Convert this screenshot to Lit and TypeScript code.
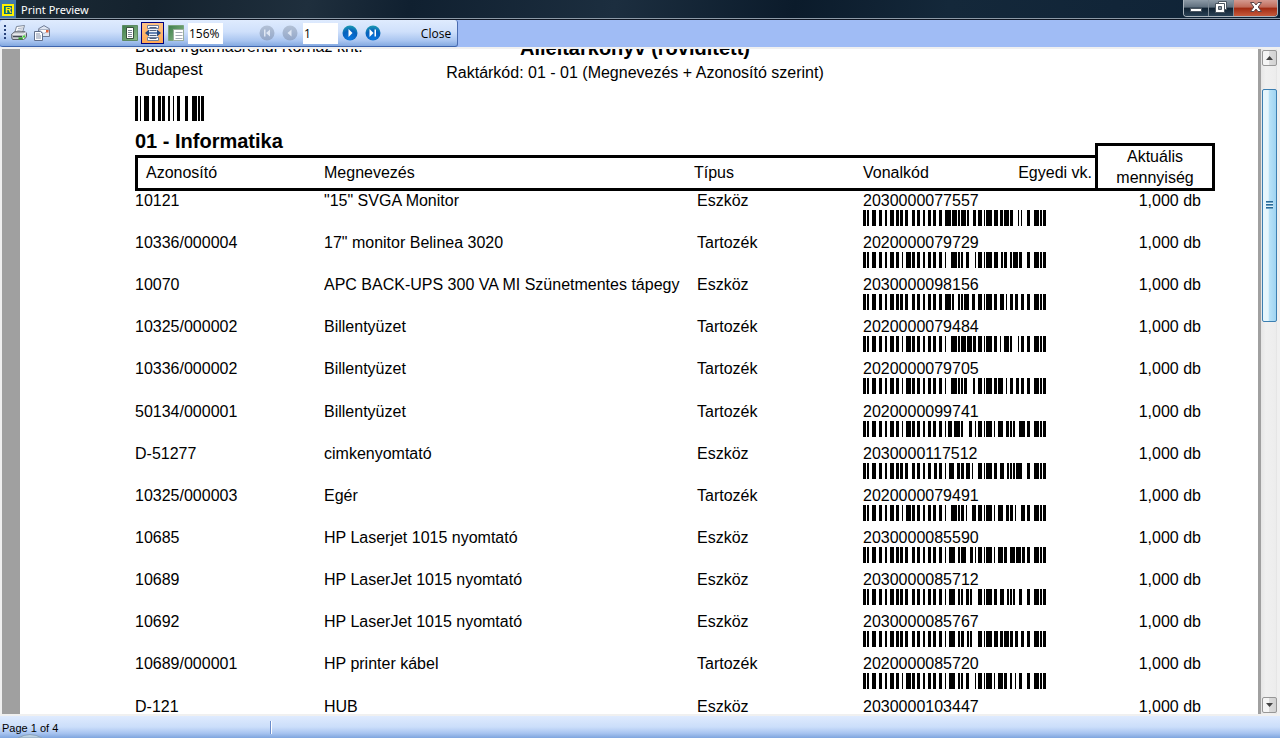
import { LitElement, html, css, svg } from "lit";
import { customElement, property } from "lit/decorators.js";

const PATTERNS = (
  "212222 222122 222221 121223 121322 131222 122213 122312 132212 221213 " +
  "221312 231212 112232 122132 122231 113222 123122 123221 223211 221132 " +
  "221231 213212 223112 312131 311222 321122 321221 312212 322112 322211 " +
  "212123 212321 232121 111323 131123 131321 112313 132113 132311 211313 " +
  "231113 231311 112133 112331 132131 113123 113321 133121 313121 211331 " +
  "231131 213113 213311 213131 311123 311321 331121 312113 312311 332111 " +
  "314111 221411 431111 111224 111422 121124 121421 141122 141221 112214 " +
  "112412 122114 122411 142112 142211 241211 221114 413111 241112 134111 " +
  "111242 121142 121241 114212 124112 124211 411212 421112 421211 212141 " +
  "214121 412121 111143 111341 131141 114113 114311 411113 411311 113141 " +
  "114131 311141 411131 211412 211214 211232 2331112"
).split(" ");

const START_C = 105;
const CODE_A = 101;
const STOP = 106;

/* Code 128: digit pairs in set C, a trailing odd digit in set A. */
function encode(digits: string): number[] {
  const values = [START_C];
  let i = 0;
  for (; i + 1 < digits.length; i += 2) values.push(Number(digits.slice(i, i + 2)));
  if (i < digits.length) values.push(CODE_A, digits.charCodeAt(i) - 32);
  const sum = values.reduce((acc, v, n) => acc + v * Math.max(n, 1), 0);
  return [...values, sum % 103, STOP];
}

@customElement("bar-code")
class BarCode extends LitElement {
  static styles = css`
    :host { display: block; }
    .bars { display: block; width: 100%; height: 100%; shape-rendering: crispEdges; }
  `;
  @property() value = "";

  render() {
    const widths = encode(this.value).map((v) => PATTERNS[v]).join("");
    let x = 0;
    let d = "";
    [...widths].forEach((w, i) => {
      if (i % 2 === 0) d += `M${x} 0h${w}v1h-${w}z`;
      x += Number(w);
    });
    return html`<svg class="bars" viewBox="0 0 ${x} 1" preserveAspectRatio="none" role="img" aria-label=${this.value}>
      <path d=${d}></path>
    </svg>`;
  }
}

const ROWS: [string, string, string, string][] = [
  ["10121", '"15" SVGA Monitor', "Eszköz", "2030000077557"],
  ["10336/000004", '17" monitor Belinea 3020', "Tartozék", "2020000079729"],
  ["10070", "APC BACK-UPS 300 VA MI Szünetmentes tápegy", "Eszköz", "2030000098156"],
  ["10325/000002", "Billentyüzet", "Tartozék", "2020000079484"],
  ["10336/000002", "Billentyüzet", "Tartozék", "2020000079705"],
  ["50134/000001", "Billentyüzet", "Tartozék", "2020000099741"],
  ["D-51277", "cimkenyomtató", "Eszköz", "2030000117512"],
  ["10325/000003", "Egér", "Tartozék", "2020000079491"],
  ["10685", "HP Laserjet 1015 nyomtató", "Eszköz", "2030000085590"],
  ["10689", "HP LaserJet 1015 nyomtató", "Eszköz", "2030000085712"],
  ["10692", "HP LaserJet 1015 nyomtató", "Eszköz", "2030000085767"],
  ["10689/000001", "HP printer kábel", "Tartozék", "2020000085720"],
  ["D-121", "HUB", "Eszköz", "2030000103447"],
];

const icon = (body: unknown) => html`<svg width="16" height="16" viewBox="0 0 16 16" aria-hidden="true">
  <defs>
    <linearGradient id="green" x1="0" y1="0" x2="1" y2="1"><stop offset="0" stop-color="#3e7d4c"/><stop offset="1" stop-color="#8fbd8a"/></linearGradient>
    <radialGradient id="blue" cx="0.5" cy="0.9" r="0.9"><stop offset="0" stop-color="#0a78e0"/><stop offset="0.6" stop-color="#0560bd"/><stop offset="1" stop-color="#1d9bb0"/></radialGradient>
    <linearGradient id="grey" x1="0" y1="0" x2="0" y2="1"><stop offset="0" stop-color="#b3c1d6"/><stop offset="1" stop-color="#93a7c9"/></linearGradient>
  </defs>${body}</svg>`;

const printer = svg`
  <path d="M5.5 1.5l8-1-2 7-8 1z" fill="#fbfbfd" stroke="#7c8798"/>
  <path d="M7 3.5l5-.6M6.4 5.5l5-.6" stroke="#a9b3c4"/>
  <path d="M.8 9l3-2.2h10.4l1.3 1.4v3.6l-2.5 2.7H1.6L.8 13z" fill="#c9ccd2" stroke="#565c66"/>
  <path d="M1.4 9.2h10.800l2.8-1.6M12.4 9.5v4.8" stroke="#f6f6f8" fill="none"/>
  <path d="M2 11.5h9" stroke="#454b55" stroke-width="1.4"/>
  <path d="M7.500 12.400h4.200v2H7.500z" fill="#33a02c"/><path d="M11.800 10.400h2.400v2h-2.400z" fill="#3fd02f"/>`;
const mail = svg`
  <path d="M4.5 3.8L10 .6l5.5 3.2v7.7h-11z" fill="#dfe6f3" stroke="#6f7c96"/>
  <path d="M4.5 4.5h11l-5.5 4z" fill="#fff" stroke="#8f9ab0" stroke-width=".7"/>
  <path d="M12 5h2.5v2.5H12z" fill="#e2653c"/>
  <path d="M.5 6.5h6l2 2v7h-8z" fill="#fdfdff" stroke="#62708c"/>
  <path d="M2 9h4M2 11h5M2 13h5" stroke="#8793ab"/>`;
const wholePage = svg`
  <path d="M.5.5h15v15H.5z" fill="url(#green)" stroke="#5d8a63"/>
  <path d="M4.5 2.5h7v11h-7z" fill="#fff" stroke="#38503d"/>
  <path d="M6 5.5h4M6 7.5h4M6 9.5h4M6 11.5h4" stroke="#7d8796"/>`;
const pageWidth = svg`
  <path d="M2.500.5h11v3h-11zM2.500 12.500h11v3h-11z" fill="#fff" stroke="#6d7f9f"/>
  <path d="M3 4h10v8H3z" fill="#eef3fb"/>
  <path d="M4.500 5.500h7M4.500 10.500h7M4.500 2.500h7M4.500 13.500h7" stroke="#54637f"/>
  <path d="M0 8l4-3.500v2.500h8V4.500l4 3.500-4 3.500V9H4v2.500z" fill="#284a80"/>
  <path d="M4 8h8" stroke="#a9c4ee"/>`;
const fullSize = svg`
  <path d="M.5.5h15v15H.5z" fill="url(#green)" stroke="#7aa47c"/>
  <path d="M5.5 4.5h10v11h-10z" fill="#fff" stroke="#9aae9d"/>
  <path d="M7.5 7.5h7M7.5 10.5h7M7.5 13.5h7" stroke="#a3a9b4"/>`;
const disc = (fill: string, shape: unknown) => svg`
  <circle cx="8" cy="8" r="7.5" fill=${`url(#${fill})`}/>${shape}`;
const first = svg`<path d="M5 4.500h1.500v7H5zM11 4.500v7L7 8z" fill="#dfe7f4"/>`;
const prev = svg`<path d="M9.5 4.5v7L5.5 8z" fill="#dfe7f4"/>`;
const next = svg`<path d="M6.5 4v8l4-4z" fill="#fff"/>`;
const last = svg`<path d="M4.5 4v8l4-4zM9.500 4.500H11v7H9.500z" fill="#fff"/>`;

@customElement("app-root")
class AppRoot extends LitElement {
  static styles = css`
    :host {
      display: flex; flex-direction: column; height: 100vh; overflow: hidden;
      background: #f0f0f0; color: #000; font: 12px "Open Sans", sans-serif;
    }
    button, input { font: inherit; color: inherit; border: 0; margin: 0; padding: 0; background: none; border-radius: 0; }

    .title {
      display: flex; align-items: flex-start; flex: none; height: 20px; box-sizing: border-box;
      background: linear-gradient(100deg, #1c2b36 0, #14222e 12%, #1f2f3d 24%, #102030 32%, #1c2e3f 48%, #0b1b2b 62%, #14283a 74%, #0e2236 100%);
      border-bottom: 1px solid #0d1420; box-shadow: inset 0 -1px #8c99a6;
    }
    .logo { flex: none; width: 16px; height: 18px; }
    .name { flex: 1; margin: 0 0 0 5px; font: 11px/19px "Noto Sans", sans-serif; color: #fff; }
    .caption { display: flex; height: 16px; margin-right: 2px; border: 1px solid #aab4bd; border-top: 0; border-radius: 0 0 4px 4px; overflow: hidden; }
    .caption button { width: 25px; display: flex; justify-content: center; border-right: 1px solid #7f8b96; background: linear-gradient(#8d9aa6 0, #5f6f7e 45%, #0f2030 50%, #2b4256 100%); }
    .caption .shut { width: 43px; border: 0; background: linear-gradient(#d49a90 0, #c06a58 45%, #a02a12 50%, #c65a3c 100%); }

    .strip { flex: none; height: 27px; background: #a0bcf5; border-bottom: 2px solid #f0f0f0; }
    .tools {
      display: flex; align-items: center; width: 458px; height: 27px; padding-left: 4px; box-sizing: border-box;
      background: linear-gradient(#dfebfe 0, #cfe0fb 45%, #a9c5f0 80%, #83a8e0 100%);
      border-bottom: 1px solid #3e65ae; border-right: 1px solid #4a6cb0; border-radius: 3px;
    }
    .grip { width: 2px; height: 16px; margin-right: 1px; background: repeating-linear-gradient(#27417a 0 2px, transparent 2px 4px); }
    .tool { display: flex; align-items: center; justify-content: center; width: 23px; height: 22px; box-sizing: border-box; }
    .on { border: 1px solid #000080; background: linear-gradient(#ffc285, #ffa953); }
    .box { width: 35px; height: 21px; padding: 0 1px; box-sizing: border-box; background: #fff; }
    .views { display: flex; margin-left: 65px; align-items: center; gap: 1px; }
    .pages { display: flex; margin-left: 32px; align-items: center; }
    .group { display: flex; }
    .pages .box { margin-left: 2px; }
    .close { width: 42px; margin-left: auto; height: 22px; }

    .view { display: flex; flex: 1; min-height: 0; padding: 0 2px; }
    .desk { display: flex; flex: 1; min-width: 0; overflow: hidden; background: #a0a0a0; padding: 0 3px 0 18px; }
    .page { flex: 1; min-width: 0; background: #fff; padding: 0 43px 0 115px; font: 16px/21px "Liberation Sans", sans-serif; margin-top: -13px; height: max-content; }
    .head { display: grid; grid-template-columns: 1fr auto 1fr; }
    .org, .sub { margin: 0; white-space: nowrap; }
    .org { width: 0; padding-bottom: 2px; }
    .mid { text-align: center; white-space: nowrap; padding-right: 80px; }
    .report { margin: 0; font-size: 20px; line-height: 24px; padding-bottom: 2px; }
    .store { width: 69px; height: 25px; margin-top: 13px; }
    .section { margin: 8px 0 -12px; font-size: 20px; line-height: 24px; padding-bottom: 14px; }

    .list { width: 100%; table-layout: fixed; border-collapse: separate; border-spacing: 0; line-height: 19px; }
    .c-id { width: 189px; } .c-type { width: 169px; } .c-code { width: 153px; } .c-own { width: 79px; } .c-qty { width: 120px; }
    th { height: 36px; box-sizing: border-box; padding: 0 0 2px; font-weight: normal; text-align: left; border: 0 solid #000; border-width: 3px 0; white-space: nowrap; }
    th:first-child { border-left-width: 3px; padding-left: 8px; }
    .own { text-align: right; padding-right: 3px; }
    .qty { border: 0; padding: 0; vertical-align: bottom; }
    .frame { margin-top: -12px; height: 48px; box-sizing: border-box; border: 3px solid #000; text-align: center; line-height: 21px; }
    tbody tr { height: 42px; }
    tbody tr:nth-child(7n + 5) { height: 43px; }
    td { padding: 0; vertical-align: top; white-space: nowrap; }
    .name-cell { overflow: hidden; }
    .type { padding-left: 3px; }
    .num { text-align: right; padding-right: 14px; }
    .code { width: 183px; height: 16px; }

    .scroll { display: flex; flex-direction: column; flex: none; width: 16px; padding-left: 1px; box-sizing: border-box; margin-right: 1px; background: linear-gradient(90deg, #e6e6e6, #f0f0f0 30%, #ededed 90%, #e2e2e2); }
    .arrow { display: flex; align-items: center; justify-content: center; height: 16px; margin: 1px 0; box-sizing: border-box; border: 1px solid #979797; border-radius: 2px; background: linear-gradient(90deg, #f5f5f5 45%, #dcdcdc 50%, #d2d2d2); }
    .track { flex: 1; padding-top: 22px; }
    .thumb { display: flex; align-items: center; justify-content: center; height: 38%; min-height: 24px; border: 1px solid #3c7fb1; border-radius: 2px; background: linear-gradient(90deg, #e6f6fd 0 40%, #b8e2f8 48%, #9fd4f1); }
    .ridges { width: 7px; height: 8px; background: repeating-linear-gradient(#2b6a98 0 1px, #6ba3c4 1px 2px, #e3f4fc 2px 3px); }

    .status { display: flex; align-items: center; flex: none; height: 22px; border-top: 2px solid #f0f0f0; background: linear-gradient(#dfebfe 0, #cbdefa 50%, #a8c4f0 78%, #7fa5de 100%); font: 11px/14px "Liberation Sans", sans-serif; position: relative; }
    .where { width: 270px; box-sizing: border-box; padding: 2px 0 0 2px; }
    .sep { width: 1px; height: 13px; background: #6a8ccb; box-shadow: 1px 0 #fff; }
    .orb { position: absolute; left: 17px; bottom: 0; }
  `;

  render() {
    return html`
      <header class="title">
        <svg class="logo" viewBox="0 0 16 18" aria-hidden="true">
          <path d="M0 0h16v18H0z" fill="#4479a8"/>
          <path d="M2 4h12v12H2z" fill="#fff200"/>
          <path d="M4 6h8v8H4z" fill="#056a80"/>
          <text x="5" y="13" font-family="Liberation Sans" font-size="9" font-weight="bold" fill="#fff200">R</text>
        </svg>
        <h1 class="name">Print Preview</h1>
        <div class="caption">
          <button aria-label="Minimize"><svg width="14" height="15"><path d="M1.5 8.5h11v3h-11z" fill="#fff" stroke="#4a5560"/></svg></button>
          <button aria-label="Restore"><svg width="14" height="15"><path d="M4.500 1.500h8v8h-8z" fill="#fff" stroke="#4a5560"/><path d="M1.500 3.500h9v9h-9z" fill="#fff" stroke="#4a5560"/><path d="M4.500 6.500h3v3h-3z" fill="#8d99a4" stroke="#4a5560"/></svg></button>
          <button class="shut" aria-label="Close window"><svg width="14" height="15"><path d="M1.500 2.500h3.500l2 2.500 2-2.500h3.500L9.200 7l3.300 4.500H9L7 9l-2 2.500H1.500L4.800 7z" fill="#fff" stroke="#5a4548"/></svg></button>
        </div>
      </header>

      <div class="strip">
        <div class="tools" role="toolbar" aria-label="Preview">
          <span class="grip"></span>
          <button class="tool" aria-label="Print">${icon(printer)}</button>
          <button class="tool" aria-label="Send">${icon(mail)}</button>
          <div class="views">
            <div class="group">
              <button class="tool" aria-label="Whole page">${icon(wholePage)}</button>
              <button class="tool on" aria-label="Page width" aria-pressed="true">${icon(pageWidth)}</button>
              <button class="tool" aria-label="Full size">${icon(fullSize)}</button>
            </div>
            <input class="box" aria-label="Zoom" .value=${"156%"} />
          </div>
          <div class="pages">
            <button class="tool" aria-label="First page">${icon(disc("grey", first))}</button>
            <button class="tool" aria-label="Previous page">${icon(disc("grey", prev))}</button>
            <input class="box" aria-label="Page" .value=${"1"} />
            <button class="tool" aria-label="Next page">${icon(disc("blue", next))}</button>
            <button class="tool" aria-label="Last page">${icon(disc("blue", last))}</button>
          </div>
          <button class="close">Close</button>
        </div>
      </div>

      <main class="view">
        <div class="desk">
          <article class="page">
            <div class="head">
              <div>
                <p class="org">Budai Irgalmasrendi Kórház kht.</p>
                <p class="org">Budapest</p>
              </div>
              <div class="mid">
                <h2 class="report">Álleltárkönyv (rövidített)</h2>
                <p class="sub">Raktárkód: 01 - 01 (Megnevezés + Azonosító szerint)</p>
              </div>
            </div>
            <bar-code class="store" value="01"></bar-code>
            <h3 class="section">01 - Informatika</h3>
            <table class="list">
              <colgroup><col class="c-id" /><col /><col class="c-type" /><col class="c-code" /><col class="c-own" /><col class="c-qty" /></colgroup>
              <thead>
                <tr>
                  <th>Azonosító</th><th>Megnevezés</th><th>Típus</th><th>Vonalkód</th>
                  <th class="own">Egyedi vk.</th>
                  <th class="qty"><div class="frame">Aktuális<br />mennyiség</div></th>
                </tr>
              </thead>
              <tbody>
                ${ROWS.map(([id, name, type, code]) => html`<tr>
                  <td>${id}</td>
                  <td class="name-cell">${name}</td>
                  <td class="type">${type}</td>
                  <td>${code}<bar-code class="code" value=${code}></bar-code></td>
                  <td></td>
                  <td class="num">1,000 db</td>
                </tr>`)}
              </tbody>
            </table>
          </article>
        </div>
        <div class="scroll">
          <button class="arrow" aria-label="Scroll up"><svg width="7" height="4"><path d="M0 4l3.500-4L7 4z" fill="#444"/></svg></button>
          <div class="track"><div class="thumb"><span class="ridges"></span></div></div>
          <button class="arrow" aria-label="Scroll down"><svg width="7" height="4"><path d="M0 0l3.500 4L7 0z" fill="#444"/></svg></button>
        </div>
      </main>

      <footer class="status">
        <span class="where">Page 1 of 4</span><span class="sep"></span>
        <svg class="orb" width="26" height="4" viewBox="0 0 26 4" aria-hidden="true"><path d="M1 4q12-7 24 0z" fill="#b9cfe2" stroke="#8ba3ba"/></svg>
      </footer>
    `;
  }
}
